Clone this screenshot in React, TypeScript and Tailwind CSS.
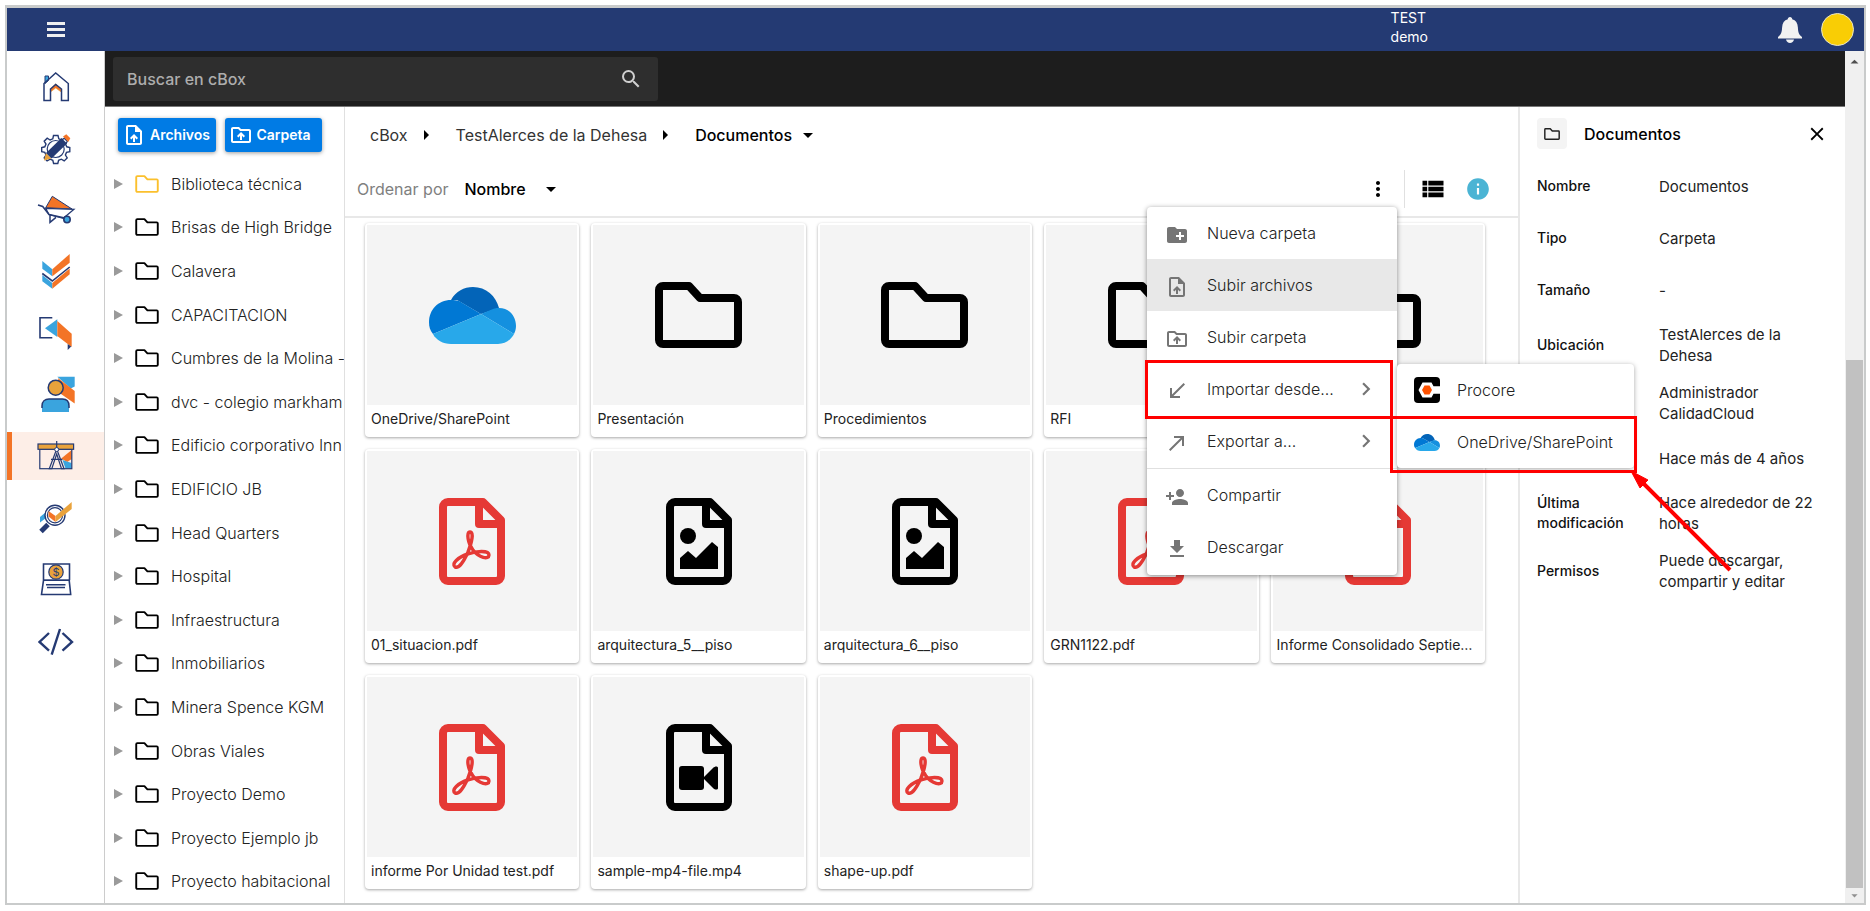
import type { ReactNode } from 'react';
import {
  MdArrowDropDown,
  MdArrowDropUp,
  MdArrowRight,
  MdCallMade,
  MdCallReceived,
  MdChevronRight,
  MdClose,
  MdCreateNewFolder,
  MdFileDownload,
  MdInfo,
  MdMoreVert,
  MdOutlineDriveFolderUpload,
  MdOutlineUploadFile,
  MdPersonAdd,
  MdSearch,
  MdViewList,
} from 'react-icons/md';

const NAVY = '#253a73';
const ORANGE = '#f37426';
const BLUE = '#3aa4de';
const GOLD = '#e9a23b';

type FileKind = 'onedrive' | 'folder' | 'pdf' | 'image' | 'video';

interface FileItem {
  name: string;
  kind: FileKind;
}

const treeItems = [
  'Biblioteca técnica',
  'Brisas de High Bridge',
  'Calavera',
  'CAPACITACION',
  'Cumbres de la Molina -',
  'dvc - colegio markham',
  'Edificio corporativo Inn',
  'EDIFICIO JB',
  'Head Quarters',
  'Hospital',
  'Infraestructura',
  'Inmobiliarios',
  'Minera Spence KGM',
  'Obras Viales',
  'Proyecto Demo',
  'Proyecto Ejemplo jb',
  'Proyecto habitacional',
];

const files: FileItem[] = [
  { name: 'OneDrive/SharePoint', kind: 'onedrive' },
  { name: 'Presentación', kind: 'folder' },
  { name: 'Procedimientos', kind: 'folder' },
  { name: 'RFI', kind: 'folder' },
  { name: '', kind: 'folder' },
  { name: '01_situacion.pdf', kind: 'pdf' },
  { name: 'arquitectura_5__piso', kind: 'image' },
  { name: 'arquitectura_6__piso', kind: 'image' },
  { name: 'GRN1122.pdf', kind: 'pdf' },
  { name: 'Informe Consolidado Septiembre', kind: 'pdf' },
  { name: 'informe Por Unidad test.pdf', kind: 'pdf' },
  { name: 'sample-mp4-file.mp4', kind: 'video' },
  { name: 'shape-up.pdf', kind: 'pdf' },
];

const details: { label: string; value: string; tall?: boolean }[] = [
  { label: 'Nombre', value: 'Documentos' },
  { label: 'Tipo', value: 'Carpeta' },
  { label: 'Tamaño', value: '-' },
  { label: 'Ubicación', value: 'TestAlerces de la Dehesa', tall: true },
  { label: '', value: 'Administrador CalidadCloud', tall: true },
  { label: '', value: 'Hace más de 4 años' },
  { label: 'Última modificación', value: 'Hace alrededor de 22 horas', tall: true },
  { label: 'Permisos', value: 'Puede descargar, compartir y editar', tall: true },
];

function OneDriveIcon({ className }: { className: string }) {
  return (
    <svg viewBox="0 0 87 57" className={className}>
      <path d="M22 13C27 4 35 0 44 0c13 0 23 9 26 21L52 27 28 13z" fill="#0364b8" />
      <path d="M22 13C9 13 0 23 0 35c0 5 1 8 4 12l48-20-22-13c-3-1-5-1-8-1z" fill="#0078d4" />
      <path d="M52 27l12-5c2-1 4-1 6-1 10 0 17 8 17 18 0 3-1 6-2 8z" fill="#1490df" />
      <path d="M4 47l48-20 33 20c-3 6-9 10-16 10H22c-8 0-15-4-18-10z" fill="#28a8ea" />
    </svg>
  );
}

function ProcoreIcon() {
  return (
    <svg viewBox="0 0 26 26" className="h-[26px] w-[26px]">
      <rect width="26" height="26" rx="4" fill="#000" />
      <path d="M4.500 13l4-7.500h9l2 3.800H26v7.400h-6.500l-2 3.800h-9z" fill="#fff" />
      <path d="M8 13l2.500-4.400h5L18 13l-2.500 4.400h-5z" fill="#ff5200" />
    </svg>
  );
}

function FolderIcon({ className, width = 8 }: { className: string; width?: number }) {
  return (
    <svg viewBox="0 0 87 66" className={className} fill="none" stroke="currentColor" strokeWidth={width} strokeLinejoin="round">
      <path d="M8 4H34l11 12H79a4 4 0 0 1 4 4V58a4 4 0 0 1-4 4H8a4 4 0 0 1-4-4V8a4 4 0 0 1 4-4z" />
    </svg>
  );
}

function SheetIcon({ className, children }: { className: string; children: ReactNode }) {
  return (
    <svg viewBox="0 0 66 87" className={className} fill="none" stroke="currentColor">
      <path strokeWidth="8" strokeLinejoin="round" d="M9 4H44L62 22V78a5 5 0 0 1-5 5H9a5 5 0 0 1-5-5V9a5 5 0 0 1 5-5z" />
      <path strokeWidth="8" strokeLinejoin="round" d="M40 5V26H61" />
      {children}
    </svg>
  );
}

function FileIcon({ kind }: { kind: FileKind }) {
  switch (kind) {
    case 'onedrive':
      return <OneDriveIcon className="h-[57px] w-[87px]" />;
    case 'folder':
      return <FolderIcon className="h-[66px] w-[87px] text-black" />;
    case 'pdf':
      return (
        <SheetIcon className="h-[87px] w-[66px] text-[#e53935]">
          <path
            strokeWidth="3.4"
            d="M16 69C12 66 19 59 29 56C37 53 50 52 50 57C50 62 40 60 34 52C29 46 27 34 31 34C35 34 33 44 29 54C25 63 20 71 16 69z"
          />
        </SheetIcon>
      );
    case 'image':
      return (
        <SheetIcon className="h-[87px] w-[66px] text-black">
          <circle cx="22" cy="38" r="8" fill="currentColor" stroke="none" />
          <path d="M14 71V60l8-7 8 7 16-16 6 5v22z" fill="currentColor" stroke="none" />
        </SheetIcon>
      );
    case 'video':
      return (
        <SheetIcon className="h-[87px] w-[66px] text-black">
          <rect x="13" y="42" width="25" height="24" rx="3" fill="currentColor" stroke="none" />
          <path d="M37 54l10-10c2-2 5-2 5 0v20c0 2-3 2-5 0z" fill="currentColor" stroke="none" />
        </SheetIcon>
      );
  }
}

// Side navigation drawings, all on a 40x40 box
const navItems: { label: string; active?: boolean; art: ReactNode }[] = [
  {
    label: 'Inicio',
    art: (
      <>
        <path d="M9 9h3.500v4.500L9 16.500z" fill={BLUE} stroke={NAVY} />
        <path d="M14.500 25v-3l5.200-5 5.500 5v3l-5.500-4z" fill={ORANGE} stroke={GOLD} strokeWidth=".6" />
        <path d="M8 33.500V16.500L19.700 6l12.600 10.500v17h-6.800V22l-5.800-4.500L14.500 22v11.500z" fill="none" stroke={NAVY} strokeWidth="1.500" />
      </>
    ),
  },
  {
    label: 'Configuración',
    art: (
      <>
        <path
          d="M17.500 6.500h4.500l.8 3.300 2.700 1.200 3-1.800 2.800 3-1.700 3 1.200 2.600 3 .8v4l-3.300.8-1.100 2.600 1.800 3-3 2.900-2.900-1.700-2.700 1.100-.8 3.200h-4.200l-.8-3.200-2.700-1.100-3 1.700-2.900-2.900 1.800-3-1.200-2.600-3.100-.8v-4l3.100-.8 1.200-2.700-1.800-2.900 3-3 2.900 1.800 2.700-1.200z"
          fill="none"
          stroke={NAVY}
          strokeWidth="1.400"
        />
        <circle cx="19.700" cy="20" r="8.500" fill="none" stroke={NAVY} strokeWidth="1.200" />
        <path d="M8 31.500l2-7.500 5.500 5.500z" fill={GOLD} />
        <path d="M10 24L25.500 9l5.500 5.500L15.500 29.500z" fill={NAVY} />
        <path d="M27 7.500l3.300-2.200 4 4-2 3.700z" fill={ORANGE} />
      </>
    ),
  },
  {
    label: 'Obra',
    art: (
      <>
        <path d="M16.300 6.300L9.700 17.700 36 19z" fill={ORANGE} stroke={NAVY} />
        <path d="M9.700 18.300L38 19.300 27.300 28.300 13 24.500z" fill="#fff" stroke={NAVY} strokeWidth="1.200" />
        <path d="M2 15l4.700 1.500L13 24.500l18 4M14 25v7.300l6-5" fill="none" stroke={NAVY} strokeWidth="1.500" />
        <circle cx="31" cy="29.500" r="3.200" fill={BLUE} stroke={NAVY} strokeWidth="1.600" />
      </>
    ),
  },
  {
    label: 'Calidad',
    art: (
      <>
        <path d="M6.300 9l10 8.300v7L6.300 16.700z" fill={BLUE} />
        <path d="M16.300 17.300L33.700 2v8.700l-17.400 13.600z" fill={ORANGE} />
        <path d="M6.300 23l10 8v5.700l-10-7.500z" fill={BLUE} />
        <path d="M16.300 31l17.400-14.500v5.800L16.300 36.700z" fill={ORANGE} />
        <path d="M6.300 21.500l10 7.500 17.400-14" fill="none" stroke={NAVY} strokeWidth="1.600" />
      </>
    ),
  },
  {
    label: 'Salidas',
    art: (
      <>
        <path d="M16.300 4.700H4v20h12.300" fill="none" stroke={NAVY} strokeWidth="1.600" />
        <path d="M9 15.300l12.300-9V24z" fill={BLUE} />
        <path d="M21.300 8l14.400 12.700V34L21.300 23z" fill={ORANGE} />
        <path d="M31.700 31l3.500 2.600-3.500 3.400z" fill={NAVY} />
      </>
    ),
  },
  {
    label: 'Usuarios',
    art: (
      <>
        <path d="M21.300 1.700h17.400v9.800l-4 2z" fill={BLUE} />
        <path d="M22 3l16.700 13v12.500L25 19z" fill={ORANGE} />
        <circle cx="19.700" cy="12.700" r="7.500" fill={GOLD} stroke={NAVY} strokeWidth="1.500" />
        <path d="M6 37v-6c0-4.500 3-7 7-7h13.500c4 0 6.500 2.500 6.500 7v6z" fill={BLUE} />
        <path d="M6 33v-2c0-4.500 3-7 7-7h13.500c4 0 6.500 2.500 6.500 7v2" fill="none" stroke={NAVY} strokeWidth="1.500" />
      </>
    ),
  },
  {
    label: 'Planos',
    active: true,
    art: (
      <>
        <path d="M35.700 14v9l-4.500 3-6-3.500z" fill={ORANGE} />
        <path d="M26.500 24l9 3v5.500h-6z" fill={BLUE} />
        <rect x="3.800" y="13.300" width="32" height="19.400" fill="none" stroke={NAVY} strokeWidth="1.200" />
        <rect x="2" y="8" width="35.600" height="5.300" fill={GOLD} stroke={NAVY} strokeWidth="1.200" />
        <path d="M20.700 5v7M20.700 13l-7.400 19.700h2.500L20.700 18l4.800 14.700H28L20.700 13M15 23.300h11.500" fill="none" stroke={NAVY} strokeWidth="1.200" />
        <circle cx="20.700" cy="13.500" r="2" fill="#fff" stroke={NAVY} />
      </>
    ),
  },
  {
    label: 'Inspección',
    art: (
      <>
        <path d="M4 19l6-5v6l-6 4.500z" fill={BLUE} />
        <circle cx="19" cy="17.300" r="10" fill="#fff" stroke={NAVY} strokeWidth="1.400" />
        <circle cx="19" cy="17.300" r="7.600" fill="none" stroke={NAVY} strokeWidth="1.200" />
        <path d="M12.500 13l7 5v6l-7-5.500z" fill={ORANGE} />
        <path d="M19.500 18L35.700 4v7L19.500 24z" fill={GOLD} />
        <path d="M5 33.500l7-7" stroke={NAVY} strokeWidth="5" />
      </>
    ),
  },
  {
    label: 'Pagos',
    art: (
      <>
        <path d="M7.500 21.300V5h26v16.300M7.500 21.300L5.500 35.500h29.200l-1.500-14.200z" fill="none" stroke={NAVY} strokeWidth="1.600" />
        <circle cx="20" cy="13" r="7.200" fill={GOLD} stroke={NAVY} strokeWidth="1.200" />
        <text x="20" y="17" textAnchor="middle" fontSize="11" fill={NAVY}>$</text>
        <path d="M10 25.800h19.500M11 28.500h18" stroke={NAVY} strokeWidth="1.400" />
        <path d="M7.500 21.300h26" stroke={NAVY} strokeWidth="1.400" />
      </>
    ),
  },
  {
    label: 'Desarrollo',
    art: <path d="M13 12L3.500 21l9.500 8.700M24 8l-8.300 25.700M26.500 12l9.500 9-9.500 8.700" fill="none" stroke={NAVY} strokeWidth="2.400" />,
  },
];

function SideNav() {
  return (
    <nav className="w-[98px] shrink-0 border-r border-[#cccccc] pt-3">
      <ul className="flex h-[602px] flex-col justify-between">
        {navItems.map((item) => (
          <li key={item.label}>
            <a
              href="#"
              aria-label={item.label}
              className={
                item.active
                  ? 'flex h-12 items-center justify-center border-l-[5px] border-[#f37426] bg-[#fdeee7] pr-[5px]'
                  : 'flex h-12 items-center justify-center'
              }
            >
              <svg viewBox="0 0 40 40" className="h-10 w-10">{item.art}</svg>
            </a>
          </li>
        ))}
      </ul>
    </nav>
  );
}

function TreePanel() {
  return (
    <div className="flex w-60 shrink-0 flex-col border-r border-[#e0e0e0]">
      <div className="flex h-[55px] items-center gap-[9px] pr-[22px] pl-[13px]">
        <button className="flex h-[34px] flex-1 items-center gap-1 rounded-[3px] bg-[#007be5] pl-1 text-sm font-semibold text-white shadow-[0_1px_4px_rgba(0,0,0,0.4)]">
          <MdOutlineUploadFile className="h-6 w-6 shrink-0" />
          Archivos
        </button>
        <button className="flex h-[34px] flex-1 items-center gap-1 rounded-[3px] bg-[#007be5] pl-1 text-sm font-semibold text-white shadow-[0_1px_4px_rgba(0,0,0,0.4)]">
          <MdOutlineDriveFolderUpload className="h-6 w-6 shrink-0" />
          Carpeta
        </button>
      </div>
      <ul className="flex flex-1 flex-col overflow-hidden">
        {treeItems.map((name, index) => (
          <li key={name} className="flex flex-1">
            <button className="flex flex-1 items-center pl-[9px] text-base font-light whitespace-nowrap text-[#222222]">
              <svg viewBox="0 0 9 10" className="mr-3 h-[10px] w-[9px] shrink-0">
                <path d="M0 0l9 5-9 5z" fill="#9a9a9a" />
              </svg>
              <FolderIcon
                width={7}
                className={index === 0 ? 'mr-3 h-[18px] w-6 shrink-0 text-[#fbc02d]' : 'mr-3 h-[18px] w-6 shrink-0 text-black'}
              />
              {name}
            </button>
          </li>
        ))}
      </ul>
    </div>
  );
}

function MenuItem({ icon, text, more, active }: { icon: ReactNode; text: string; more?: boolean; active?: boolean }) {
  return (
    <button
      role="menuitem"
      className={
        active
          ? 'flex h-[52px] w-full items-center bg-[#e8e8e8] pr-[18px] pl-[17px] text-left text-base font-light text-[#222222]'
          : 'flex h-[52px] w-full items-center pr-[18px] pl-[17px] text-left text-base font-light text-[#222222]'
      }
    >
      <span className="mr-[17px] flex w-[26px] shrink-0 justify-center text-2xl text-[#757575]">{icon}</span>
      <span className="flex-1">{text}</span>
      {more && <MdChevronRight className="h-[26px] w-[26px] text-[#757575]" />}
    </button>
  );
}

function ActionsMenu() {
  return (
    <div role="menu" className="absolute top-[100px] right-[121px] z-20 w-[250px] rounded bg-white pb-0.5 shadow-[0_1px_5px_rgba(0,0,0,0.45)]">
      <MenuItem icon={<MdCreateNewFolder className="mt-1" />} text="Nueva carpeta" />
      <MenuItem icon={<MdOutlineUploadFile className="mt-1" />} text="Subir archivos" active />
      <MenuItem icon={<MdOutlineDriveFolderUpload className="mt-1" />} text="Subir carpeta" />
      <MenuItem icon={<MdCallReceived className="mt-1" />} text="Importar desde..." more />
      <MenuItem icon={<MdCallMade className="mt-1" />} text="Exportar a..." more />
      <hr className="mt-px border-[#e0e0e0]" />
      <MenuItem icon={<MdPersonAdd className="mt-1" />} text="Compartir" />
      <MenuItem icon={<MdFileDownload className="mt-1" />} text="Descargar" />

      <div role="menu" className="absolute top-[157px] left-full w-[237px] rounded bg-white shadow-[0_1px_5px_rgba(0,0,0,0.35)]">
        <MenuItem icon={<ProcoreIcon />} text="Procore" />
        <MenuItem icon={<OneDriveIcon className="h-[17px] w-[26px]" />} text="OneDrive/SharePoint" />
      </div>

      {/* Red callouts and pointer over the import option */}
      <div className="absolute top-[153px] -left-0.5 h-[59px] w-[248px] border-[3px] border-[#ff0000]" />
      <div className="absolute top-[209px] left-[243px] h-[57px] w-[247px] border-[3px] border-[#ff0000]" />
      <svg viewBox="0 0 102 102" className="absolute top-[264px] left-[484px] h-[102px] w-[102px]">
        <path d="M8 8l91 91" stroke="#ff0000" strokeWidth="4" />
        <path d="M0 0l17 9-8 8z" fill="#ff0000" stroke="#ff0000" />
      </svg>
    </div>
  );
}

function FileCard({ file }: { file: FileItem }) {
  return (
    <li className="flex h-[214px] min-w-0 flex-col rounded bg-white p-0.5 shadow-[0_1px_3px_rgba(0,0,0,0.35)]">
      <div className="flex h-[180px] items-center justify-center bg-[#f4f4f4]">
        <FileIcon kind={file.kind} />
      </div>
      <div className="truncate px-1 pt-1 text-sm leading-5 text-[#222222]">{file.name}</div>
    </li>
  );
}

function Browser() {
  return (
    <main className="relative min-w-0 flex-1">
      <div className="flex h-[55px] items-center pl-[25px] text-base text-[#333333]">
        <a href="#">cBox</a>
        <MdArrowRight className="mx-1.5 h-6 w-6 text-black" />
        <a href="#" className="ml-3">TestAlerces de la Dehesa</a>
        <MdArrowRight className="mx-1.5 h-6 w-6 text-black" />
        <button className="ml-3 flex items-center gap-1 font-medium text-black">
          Documentos
          <MdArrowDropDown className="h-6 w-6" />
        </button>
      </div>
      <div className="flex h-[56px] items-center border-b-2 border-[#e8e8e8] pr-[27px] pl-3 text-base">
        <label htmlFor="orden" className="text-[#808080]">Ordenar por</label>
        <div className="relative ml-4 flex items-center">
          <select id="orden" className="w-[98px] appearance-none bg-transparent font-medium text-black">
            <option>Nombre</option>
          </select>
          <MdArrowDropDown className="pointer-events-none absolute right-0 h-6 w-6" />
        </div>
        <div className="ml-auto flex items-center">
          <button aria-label="Más acciones" className="mr-3.5">
            <MdMoreVert className="h-6 w-6" />
          </button>
          <div className="h-[38px] w-px bg-[#e0e0e0]" />
          <button aria-label="Vista de lista" className="ml-3.5">
            <MdViewList className="h-7 w-7" />
          </button>
          <button aria-label="Información" className="ml-[18px]">
            <MdInfo className="h-[26px] w-[26px] text-[#4bb4d4]" />
          </button>
        </div>
      </div>
      <ul className="grid grid-cols-5 gap-3 pt-[5px] pr-[33px] pl-5">
        {files.map((file, index) => (
          <FileCard key={index} file={file} />
        ))}
      </ul>
      <ActionsMenu />
    </main>
  );
}

function DetailsPanel() {
  return (
    <aside className="w-[327px] shrink-0 border-l-2 border-[#e8e8e8] pl-[17px]">
      <div className="flex h-[53px] items-center pr-[17px]">
        <div className="flex h-[31px] w-[30px] items-center justify-center rounded-sm bg-[#f4f4f4]">
          <FolderIcon className="h-3 w-4 text-[#222222]" />
        </div>
        <h2 className="ml-[17px] text-base font-medium">Documentos</h2>
        <button aria-label="Cerrar" className="ml-auto">
          <MdClose className="h-[22px] w-[22px]" />
        </button>
      </div>
      <dl>
        {details.map((row) => (
          <div key={row.value} className={row.tall ? 'flex h-[58px] items-center' : 'flex h-[52px] items-center'}>
            <dt className="w-[122px] shrink-0 pr-6 text-sm leading-5 font-medium text-[#111111]">{row.label}</dt>
            <dd className="w-40 text-[15px] leading-[21px] text-[#222222]">{row.value}</dd>
          </div>
        ))}
      </dl>
    </aside>
  );
}

export default function App() {
  return (
    <div className="flex h-screen flex-col bg-white pt-[5px] pr-1 pb-1.5 pl-[5px] font-['Inter',sans-serif]">
      <div className="flex min-h-0 flex-1 flex-col border-2 border-t-[3px] border-[#c9cbcb]">
        <header className="flex h-[43px] shrink-0 items-center bg-[#243a73] pr-[10px] pl-10 text-white">
          <button aria-label="Menú" className="flex w-[18px] flex-col gap-[3px]">
            <span className="h-[3px] bg-[#efefef]" />
            <span className="h-[3px] bg-[#efefef]" />
            <span className="h-[3px] bg-[#efefef]" />
          </button>
          <div className="mr-[350px] ml-auto pb-1.5 text-sm leading-[19px]">
            <div>TEST</div>
            <div>demo</div>
          </div>
          <button aria-label="Notificaciones" className="mr-[19px]">
            <svg viewBox="0 0 24 26" className="h-[26px] w-6" fill="#f2f2f2">
              <path d="M12 0c1.400 0 2.200 1 2.200 2.200 3.600 1 5.500 3.900 5.700 8.300.2 5 1 7 4.100 9.500v1.500H0V20c3-2.500 3.900-4.500 4.100-9.500.2-4.400 2.100-7.300 5.700-8.300C9.800 1 10.600 0 12 0z" />
              <path d="M8 22.500h8c-.5 2.200-2 3.500-4 3.500s-3.500-1.300-4-3.500z" />
            </svg>
          </button>
          <button aria-label="Cuenta" className="h-[33px] w-[33px] rounded-full border border-[#e8e4c8] bg-[#f9cd05]" />
        </header>

        <div className="flex min-h-0 flex-1">
          <SideNav />
          <div className="flex min-w-0 flex-1 flex-col">
            <div className="flex h-14 shrink-0 items-center border-b border-[#777777] bg-[#1d1d1d] px-2">
              <div className="flex h-11 w-[545px] items-center rounded-[3px] bg-[#2e2e2e] pr-[15px] pl-3.5">
                <input
                  type="search"
                  aria-label="Buscar en cBox"
                  placeholder="Buscar en cBox"
                  className="flex-1 bg-transparent text-base font-medium text-white outline-none placeholder:text-[#adadad]"
                />
                <MdSearch className="h-6 w-6 text-[#cfcfcf]" />
              </div>
            </div>
            <div className="flex min-h-0 flex-1">
              <TreePanel />
              <Browser />
              <DetailsPanel />
            </div>
          </div>
          <div className="flex w-[19px] shrink-0 flex-col items-center bg-[#f0f0f0]">
            <MdArrowDropUp className="h-[22px] w-[19px] text-[#505050]" />
            <div className="h-[287px]" />
            <div className="w-[17px] flex-1 bg-[#c1c1c1]" />
            <MdArrowDropDown className="h-[15px] w-[19px] text-[#909090]" />
          </div>
        </div>
      </div>
    </div>
  );
}
